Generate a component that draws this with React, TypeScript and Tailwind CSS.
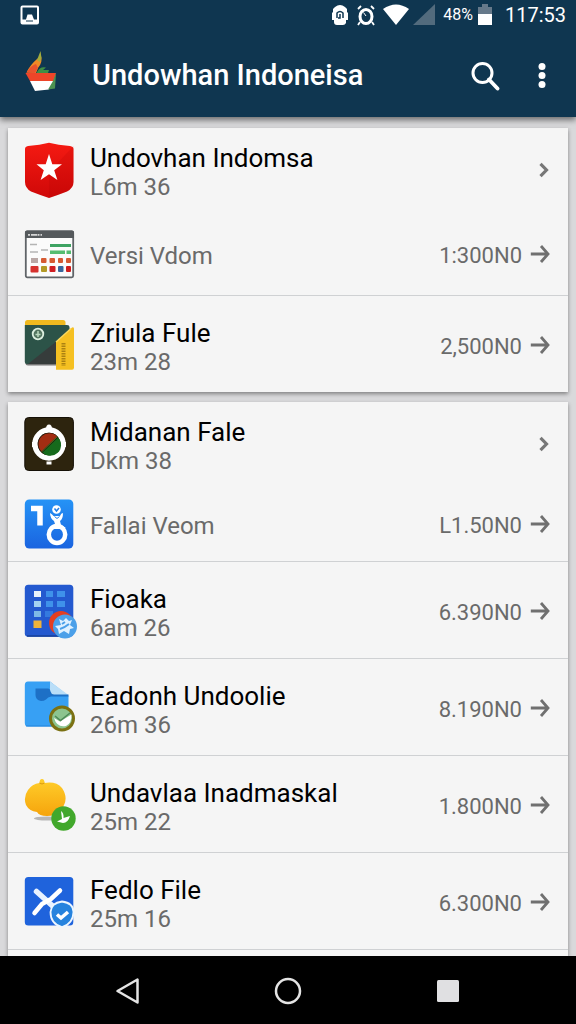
import type { ReactNode } from 'react';

type Item = {
  title: string;
  sub: string;
  price: string;
  icon: ReactNode;
};

type Group = {
  head: { title: string; sub: string; icon: ReactNode };
  detail: { title: string; price: string; icon: ReactNode; height: string };
  items: Item[];
  className: string;
};

function AppIcon({ children }: { children: ReactNode }) {
  return (
    <svg viewBox="0 0 54 56" className="h-14 w-[54px] shrink-0" aria-hidden="true">
      {children}
    </svg>
  );
}

const shieldIcon = (
  <AppIcon>
    <defs>
      <linearGradient id="shield" x1="0" y1="0" x2="0" y2="1">
        <stop offset="0" stopColor="#f51a12" />
        <stop offset="1" stopColor="#cf0808" />
      </linearGradient>
    </defs>
    <path
      d="M1 7Q1 4.500 4 4Q16 3 25 .8Q34 3 46 4Q49.500 4.500 49.500 7V40Q49.500 46 43 49.500Q34 53 25 56Q16 53 7 49.500Q1 46 1 40Z"
      fill="url(#shield)"
    />
    <path d="M25 56Q34 53 43 49.500Q49.500 46 49.500 40V4L25 30Z" fill="#a00" opacity=".15" />
    <path
      d="M25 12L28.300 22.200H38L30.200 28.200L33.400 38L25 32.200L16.600 38L19.800 28.200L12.500 22.200H21.700Z"
      fill="#fff"
    />
  </AppIcon>
);

const windowIcon = (
  <AppIcon>
    <rect x="1.800" y="5.300" width="47.400" height="46" rx="1.500" fill="#fbfbfb" stroke="#606468" strokeWidth="1.800" />
    <path d="M1 6Q1 4.400 3 4.400H48Q50 4.400 50 6V12H1Z" fill="#55595c" />
    <path d="M4 8.800H18" stroke="#d6d6d6" strokeWidth="1.800" strokeDasharray="2 1 6 .5" />
    <path d="M6 18.500H13M6 26H14M17 24H24" stroke="#b5b5b5" strokeWidth="1.500" />
    <path d="M26 19.500H47" stroke="#3fa463" strokeWidth="3" />
    <path d="M26 26.300H41M42.500 26.300H47" stroke="#55bd70" strokeWidth="3.500" />
    <rect x="7" y="32" width="7" height="5" fill="#b9a8a6" />
    <g fill="#d65a32">
      <rect x="17" y="32" width="5.500" height="5" rx="1" />
      <rect x="25.500" y="32" width="5.500" height="5" rx="1" />
      <rect x="34" y="32" width="5" height="5" rx="1" />
      <rect x="42" y="32" width="5" height="5" rx="1" />
    </g>
    <rect x="6.500" y="40" width="8" height="6.500" rx="1" fill="#d6322f" />
    <rect x="17" y="40" width="6" height="6" rx="1" fill="#b39a26" />
    <rect x="25.500" y="40" width="6" height="6" rx="1" fill="#cf1d22" />
    <rect x="34" y="40" width="5.500" height="6" rx="1" fill="#38669c" />
    <rect x="42" y="40" width="5" height="6" rx="1" fill="#d01d1d" />
  </AppIcon>
);

const walletIcon = (
  <AppIcon>
    <rect x="1" y="3" width="40.500" height="24" rx="2.500" fill="#f0b91f" />
    <rect x="1.500" y="10" width="44" height="38.500" rx="2.500" fill="#777" />
    <path d="M.8 8H43Q45.500 8 45.500 10V47H3Q.8 47 .8 45Z" fill="#2c5348" />
    <path d="M4 47L45.500 14V47Z" fill="#363c3b" />
    <circle cx="14" cy="17" r="5.300" fill="#52745f" stroke="#dcefe0" strokeWidth="1.800" />
    <path d="M14 14V20M11.500 17.500H16.500" stroke="#b9d8bf" strokeWidth="1.500" />
    <path d="M32 25L48 10.500Q50 9.500 50 12V50.500Q50 52.800 48 52.800H32Z" fill="#f5c022" />
    <path d="M32 25L47 11.500" stroke="#fbd85d" strokeWidth="1.500" />
    <path d="M39.500 26V49" stroke="#ac8112" strokeWidth="4" strokeDasharray="1.500 1" />
  </AppIcon>
);

const dialIcon = (
  <AppIcon>
    <rect x=".8" y="1.500" width="48.600" height="53" rx="4" fill="#2d240e" stroke="#151007" />
    <path d="M22 13Q22 8.500 25 8.500T28 13" fill="#fff" />
    <circle cx="25" cy="28" r="14" fill="none" stroke="#fff" strokeWidth="5.500" />
    <path d="M8 26H11V31H8ZM39 26H42V31H39Z" fill="#fff" />
    <path d="M22.500 45.500H27.500V48.500H22.500Z" fill="#fff" />
    <circle cx="25" cy="28" r="11.300" fill="#241a0c" />
    <path d="M17.500 35.500A10.500 10.500 0 0 1 33 20.500Z" fill="#a32d12" />
    <path d="M18.500 36.500A10.500 10.500 0 0 0 34 21.500Z" fill="#166a1c" />
    <path d="M17.500 36L33.500 20.500" stroke="#48711f" />
  </AppIcon>
);

const numbersIcon = (
  <AppIcon>
    <defs>
      <linearGradient id="numbers" x1="0" y1="0" x2="0" y2="1">
        <stop offset="0" stopColor="#2593f6" />
        <stop offset="1" stopColor="#1a64e0" />
      </linearGradient>
    </defs>
    <rect x=".8" y="3.500" width="48.500" height="49" rx="4.500" fill="url(#numbers)" />
    <path d="M7 12.500H16V29.500" fill="none" stroke="#fff" strokeWidth="5.500" />
    <ellipse cx="33" cy="38.500" rx="8.200" ry="8.500" fill="none" stroke="#fff" strokeWidth="4.500" />
    <circle cx="32.500" cy="13.500" r="4.300" fill="#fff" />
    <path d="M30.500 12.500L32.500 15L35 12" fill="none" stroke="#237fe9" strokeWidth="1.500" />
    <path d="M26 17Q28 18 29.500 20H36Q37 17 39 17Q39 23 36 25L37 29L42 32L36 33H28L26 31L31 28L30 25Q26 22 26 17Z" fill="#fff" />
    <path d="M30.500 20.500L33 22.500L35.500 20.500" fill="none" stroke="#237fe9" />
  </AppIcon>
);

const gridIcon = (
  <AppIcon>
    <rect x=".8" y="1.800" width="48.500" height="52" rx="3.500" fill="#2459cf" />
    <path d="M3 53H46" stroke="#174099" strokeWidth="1.500" />
    <g fill="#3f91ea">
      <rect x="22" y="8" width="7" height="6" />
      <rect x="33" y="8" width="8" height="6" />
      <rect x="22" y="18" width="7" height="6" />
      <rect x="33" y="18" width="8" height="6" />
      <rect x="21" y="28" width="8" height="6" opacity=".6" />
    </g>
    <rect x="10" y="8" width="7" height="6" fill="#e9f3fb" />
    <rect x="10" y="18" width="7" height="6" fill="#a3d2f1" />
    <rect x="10" y="28" width="7" height="6" fill="#7eb9e6" />
    <rect x="9.500" y="37.500" width="8" height="7.500" fill="#efb33a" />
    <circle cx="37" cy="40" r="12" fill="#e43e20" />
    <circle cx="41" cy="43.500" r="12" fill="#4ba0e9" />
    <path
      d="M35 36L39 38L42 35L45 38L48 37L46 42L50 45L46 46L45 51L40 48L35 51L34 46L31 43L37 42Z"
      fill="#dff1ff"
    />
    <path d="M36 46Q40 45 45 41M38 41L41 39" stroke="#4ba0e9" strokeWidth="2" fill="none" />
  </AppIcon>
);

const folderIcon = (
  <AppIcon>
    <path d="M4 1.500H26L44.500 16V46.500H4Q.8 46.500 .8 43V5Q.8 1.500 4 1.500Z" fill="#37a0f4" />
    <path d="M26 1.500L44.500 15H30Q26 15 26 11Z" fill="#b9def8" />
    <path d="M11.500 8.500H24Q26 8.500 26.500 11.500Q27 14 30 14.500H44.500V16.500H27Q24 17 22 19.500Q20 21 17 21Q11.500 20 11.500 15Z" fill="#1d70c6" />
    <path d="M2 46H43" stroke="#2384dc" />
    <circle cx="38" cy="38.500" r="11.500" fill="#8cc48f" stroke="#7b7113" strokeWidth="3" />
    <path d="M30 38L36 41.500L47.500 34.500Q48 43 42 46Q33 48 30 38Z" fill="#fff" />
    <path d="M31 36L36.500 40.500L46 33" fill="none" stroke="#4d8a58" strokeWidth="1.500" />
  </AppIcon>
);

const pumpkinIcon = (
  <AppIcon>
    <defs>
      <linearGradient id="pumpkin" x1="0" y1="0" x2="0" y2="1">
        <stop offset="0" stopColor="#ffce2b" />
        <stop offset="1" stopColor="#f6a40c" />
      </linearGradient>
    </defs>
    <ellipse cx="23" cy="41.500" rx="13" ry="2" fill="#b7b7b7" />
    <path
      d="M15.500 6Q15.500 2 18 2Q20.500 2 20.500 6Q32 4 38 11Q44 20 40 28Q38 33 34 34Q31 39 23 39Q15 39 13 35Q5 34 2 28Q-1 20 4 13Q8 7 15.500 6Z"
      fill="url(#pumpkin)"
    />
    <path d="M15.500 6Q18 8 20.500 6" fill="none" stroke="#dc9a0c" />
    <circle cx="39.500" cy="41.500" r="12.200" fill="#42a82c" />
    <path d="M37 34Q40 36 39.500 41L46 39Q44 46 39 46L33 44.500L38 42Z" fill="#fff" />
  </AppIcon>
);

const toolsIcon = (
  <AppIcon>
    <rect x=".8" y="3" width="48.500" height="48.500" rx="3.500" fill="#1f63dc" />
    <path d="M12.500 17.500L32 35" stroke="#e8f2ff" strokeWidth="5.500" strokeLinecap="round" />
    <path d="M36 16.500L27 25L18 30L10.500 39" fill="none" stroke="#fff" strokeWidth="4.500" strokeLinecap="round" />
    <path
      d="M38 27.500Q49.500 29 49.500 38Q49 50 38 53Q26.500 50 26.500 38Q27 29 38 27.500Z"
      fill="#2683de"
      stroke="#edf6ff"
      strokeWidth="1.800"
    />
    <path d="M33 40.500L37 44L44 38" fill="none" stroke="#fff" strokeWidth="3.500" />
  </AppIcon>
);

const groups: Group[] = [
  {
    head: { title: 'Undovhan Indomsa', sub: 'L6m 36', icon: shieldIcon },
    detail: { title: 'Versi Vdom', price: '1:300N0', icon: windowIcon, height: 'h-[83px]' },
    items: [{ title: 'Zriula Fule', sub: '23m 28', price: '2,500N0', icon: walletIcon }],
    className: '',
  },
  {
    head: { title: 'Midanan Fale', sub: 'Dkm 38', icon: dialIcon },
    detail: { title: 'Fallai Veom', price: 'L1.50N0', icon: numbersIcon, height: 'h-[75px]' },
    items: [
      { title: 'Fioaka', sub: '6am 26', price: '6.390N0', icon: gridIcon },
      { title: 'Eadonh Undoolie', sub: '26m 36', price: '8.190N0', icon: folderIcon },
      { title: 'Undavlaa Inadmaskal', sub: '25m 22', price: '1.800N0', icon: pumpkinIcon },
      { title: 'Fedlo File', sub: '25m 16', price: '6.300N0', icon: toolsIcon },
    ],
    className: 'grow [&>li:last-child]:border-b',
  },
];

function Price({ value }: { value: string }) {
  return (
    <span className="flex shrink-0 items-center gap-2">
      <span className="pt-1 text-[22px] leading-7 text-[#6a6a6a]">{value}</span>
      <svg viewBox="0 0 20 20" className="size-5" aria-hidden="true">
        <path d="M.8 10H17M11 2L18 10L11 18" fill="none" stroke="#707070" strokeWidth="2.800" />
      </svg>
    </span>
  );
}

function Labels({ title, sub }: { title: string; sub: string }) {
  return (
    <span className="flex min-w-0 grow flex-col pt-1">
      <span className="truncate text-[26px] leading-[30px] text-black">{title}</span>
      <span className="text-2xl leading-7 text-[#6a6a6a]">{sub}</span>
    </span>
  );
}

function Card({ group }: { group: Group }) {
  const { head, detail, items, className } = group;
  return (
    <ul className={`bg-[#f5f5f5] shadow-[0_2px_4px_rgba(0,0,0,0.4)] ${className}`}>
      <li>
        <a href="#" className="flex h-[84px] items-center gap-3 pr-[18px] pl-4">
          {head.icon}
          <Labels title={head.title} sub={head.sub} />
          <svg viewBox="0 0 12 16" className="h-4 w-3 shrink-0" aria-hidden="true">
            <path d="M2.500 1.800L8.500 8L2.500 14.200" fill="none" stroke="#777" strokeWidth="3.200" />
          </svg>
        </a>
      </li>
      <li>
        <a href="#" className={`flex items-center gap-3 pr-[18px] pl-4 ${detail.height}`}>
          {detail.icon}
          <span className="grow pt-1 text-2xl text-[#6a6a6a]">{detail.title}</span>
          <Price value={detail.price} />
        </a>
      </li>
      {items.map((item) => (
        <li key={item.title} className="border-t border-[#cfd1d3]">
          <a href="#" className="flex h-24 items-center gap-3 pt-0.5 pr-[18px] pl-4">
            {item.icon}
            <Labels title={item.title} sub={item.sub} />
            <Price value={item.price} />
          </a>
        </li>
      ))}
    </ul>
  );
}

function StatusBar() {
  return (
    <div className="flex h-[30px] items-center px-[10px] text-white">
      <svg viewBox="0 0 20 20" className="ml-[10px] size-5" aria-hidden="true">
        <rect x="1.500" y="1.500" width="16.500" height="17" rx="1" fill="none" stroke="#fff" strokeWidth="2" />
        <path d="M2 14.500H6L7.500 9.500H12L14 14.500H18V18H2Z" fill="#fff" />
        <path d="M6 16H13" stroke="#0f3650" />
      </svg>
      <div className="ml-auto flex items-center">
        <svg viewBox="0 0 18 22" className="mr-2 h-[22px] w-[18px]" aria-hidden="true">
          <path d="M4 3Q9-1 14 3L16 5V8L17 9V16H15V19Q14 21 12 21H6Q3 21 3 18V16H1V9L2 8V5Z" fill="#fff" />
          <path d="M6 14V9Q9 6 12 9V14M9 10V14H7" fill="none" stroke="#0f3650" strokeWidth="1.500" />
        </svg>
        <svg viewBox="0 0 18 22" className="mr-2 h-[22px] w-[18px]" aria-hidden="true">
          <ellipse cx="9" cy="12.500" rx="6" ry="7" fill="none" stroke="#fff" strokeWidth="3" />
          <path d="M1 5L4 2M17 5L14 2M3 18L1 21M15 18L17 21" stroke="#fff" strokeWidth="1.800" />
          <path d="M6.500 8.500L9 12" stroke="#fff" />
        </svg>
        <svg viewBox="0 0 26 22" className="mr-1 h-[22px] w-[26px]" aria-hidden="true">
          <path d="M0 5Q13-4 26 5L13 21Z" fill="#fff" />
        </svg>
        <svg viewBox="0 0 22 22" className="mr-2 size-[22px]" aria-hidden="true">
          <path d="M22 0V21H0Z" fill="#526b7d" />
        </svg>
        <span className="mr-1 text-base">48%</span>
        <svg viewBox="0 0 16 22" className="mr-3 h-[22px] w-4" aria-hidden="true">
          <path d="M5 0H11V3H15V11H1V3H5Z" fill="#66798a" />
          <path d="M1 10H15V21H1Z" fill="#fff" />
        </svg>
        <span className="text-xl">117:53</span>
      </div>
    </div>
  );
}

export default function App() {
  return (
    <div className="flex min-h-screen flex-col bg-[#d9d9db] font-[Roboto,sans-serif]">
      {/* Header */}
      <header className="z-10 bg-[#0f3650] shadow-[0_3px_6px_rgba(0,0,0,0.5)]">
        <StatusBar />
        <div className="flex h-[87px] items-center pt-1 pr-[22px] pl-6">
          <svg viewBox="0 0 34 52" className="h-[52px] w-[34px]" aria-hidden="true">
            <path d="M2.500 22.500Q6 15 13 9L17 6Q19 12 14 18L12 23Z" fill="#f08a26" />
            <path d="M2.500 22.500Q7 15 12 14L14 18L11 23Z" fill="#e9532d" />
            <path d="M16.500 1L17.500 8L16 12L13 10Z" fill="#a3ac3c" />
            <path d="M13 22Q16 16 22 17.500L19 20L25 20L24 23H13Z" fill="#3e8f45" />
            <path d="M1.500 23H32L30 31H6Z" fill="#ee4529" />
            <path d="M6 31H30L25 39.500L11 41Z" fill="#fff" />
            <path d="M32 23L31 38.500L24 39.500L29 31Z" fill="#4c9251" />
          </svg>
          <h1 className="ml-[34px] grow text-[29px] font-medium text-white">Undowhan Indoneisa</h1>
          <button type="button" aria-label="Search" className="mr-[30px]">
            <svg viewBox="0 0 30 30" className="size-[30px]" aria-hidden="true">
              <circle cx="12.500" cy="12" r="9.500" fill="none" stroke="#fff" strokeWidth="3" />
              <path d="M19 18.500L27.500 27.500" stroke="#fff" strokeWidth="3.800" strokeLinecap="round" />
            </svg>
          </button>
          <button type="button" aria-label="More options" className="px-2">
            <svg viewBox="0 0 8 28" className="h-7 w-2" fill="#fff" aria-hidden="true">
              <circle cx="4" cy="4.500" r="3.500" />
              <circle cx="4" cy="13.500" r="3.500" />
              <circle cx="4" cy="22.500" r="3.500" />
            </svg>
          </button>
        </div>
      </header>

      {/* Lists */}
      <main className="flex grow flex-col gap-[10px] px-2 pt-[11px]">
        {groups.map((group) => (
          <Card key={group.head.title} group={group} />
        ))}
      </main>

      {/* Navigation bar */}
      <nav className="z-10 flex h-[68px] items-center justify-center gap-[132px] bg-black pt-0.5">
        <button type="button" aria-label="Back">
          <svg viewBox="0 0 28 28" className="size-7" aria-hidden="true">
            <path d="M23.500 2.500V25.500L3.500 14Z" fill="none" stroke="#e4e4e4" strokeWidth="2.500" strokeLinejoin="round" />
          </svg>
        </button>
        <button type="button" aria-label="Home">
          <svg viewBox="0 0 28 28" className="size-7" aria-hidden="true">
            <circle cx="14" cy="14" r="12" fill="none" stroke="#e4e4e4" strokeWidth="2.500" />
          </svg>
        </button>
        <button type="button" aria-label="Recent apps">
          <svg viewBox="0 0 28 28" className="size-7" aria-hidden="true">
            <rect x="3" y="3" width="22" height="22" rx="1.500" fill="#e0e0e2" />
          </svg>
        </button>
      </nav>
    </div>
  );
}
